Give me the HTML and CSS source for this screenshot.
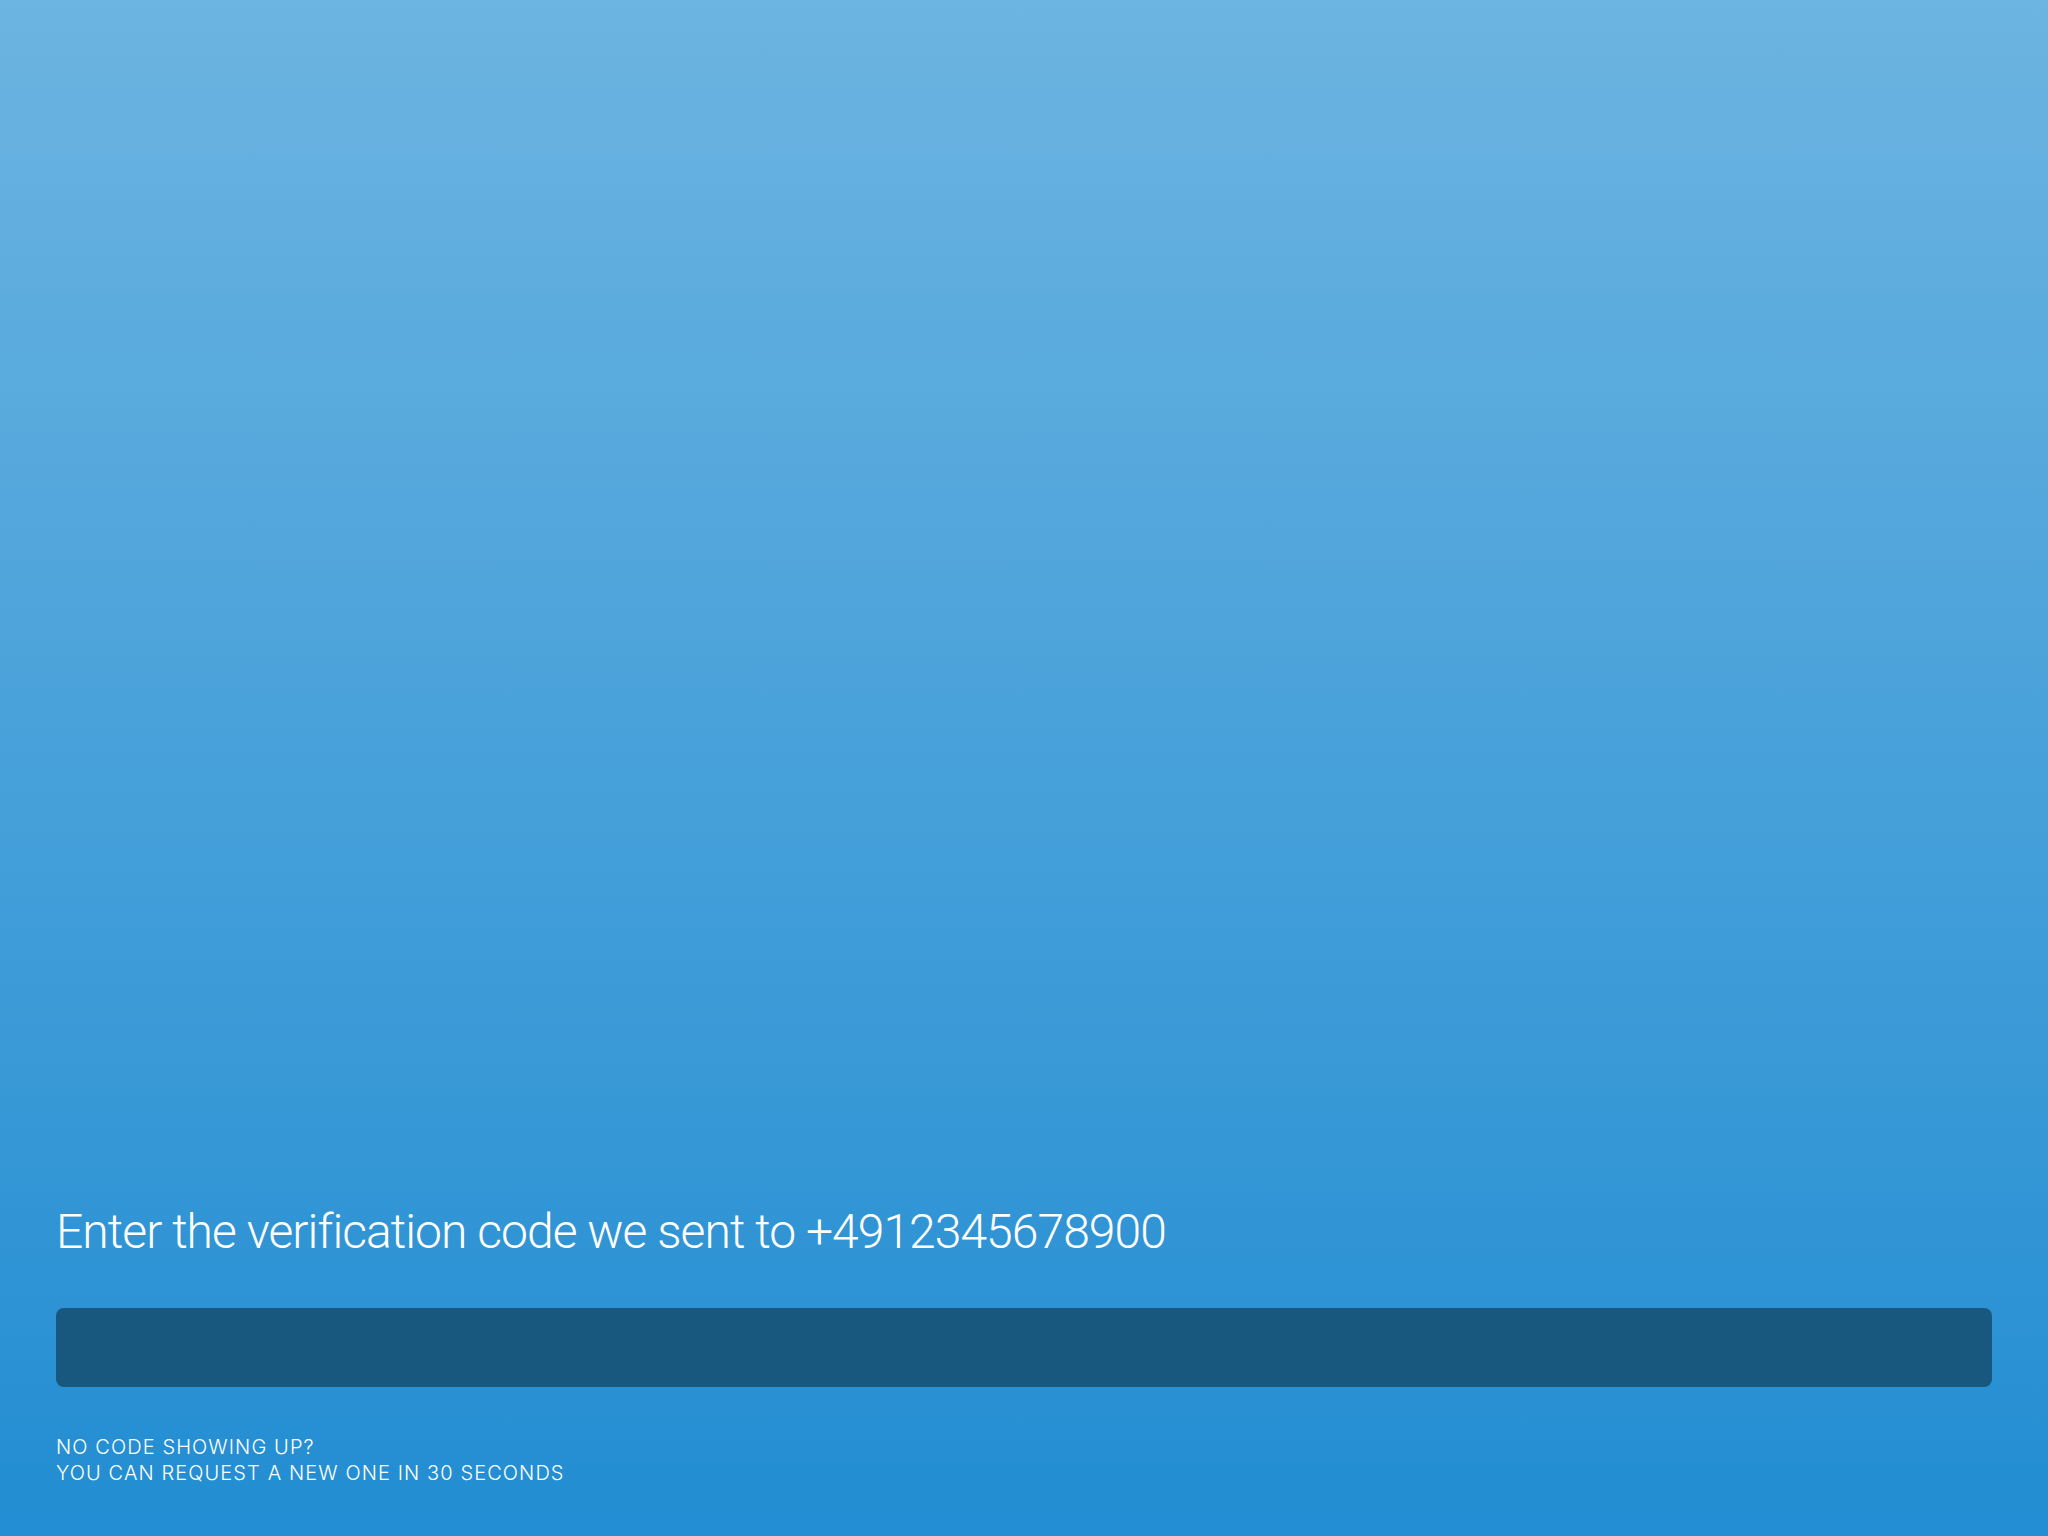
FILE: index.html
```html
<!DOCTYPE html>
<html>
<head>
<meta charset="utf-8">
<link rel="stylesheet" href="styles.css">
</head>
<body>
<main class="screen">
  <h1 class="title">Enter the verification code we sent to +4912345678900</h1>
  <div class="code-input"></div>
  <p class="hint">NO CODE SHOWING UP?<br>YOU CAN REQUEST A NEW ONE IN 30 SECONDS</p>
</main>
</body>
</html>
```
FILE: styles.css
```css
html, body {
  margin: 0;
  padding: 0;
}
body {
  width: 2048px;
  height: 1536px;
  background: linear-gradient(to bottom, #6cb4e1 0%, #228dd2 100%);
  font-family: Inter, "Noto Sans", sans-serif;
  color: #fff;
  overflow: hidden;
}
.screen {
  box-sizing: border-box;
  height: 1536px;
  display: flex;
  flex-direction: column;
  justify-content: flex-end;
  padding: 0 56px 50px 56px;
}
.title {
  margin: 0 0 46px 0;
  font-family: Roboto, Inter, sans-serif;
  font-weight: 300;
  font-size: 48px;
  line-height: 60px;
  letter-spacing: -0.95px;
}
.code-input {
  height: 79px;
  background: #18587e;
  border-radius: 8px;
  margin-bottom: 47px;
}
.hint {
  margin: 0;
  font-size: 20px;
  line-height: 26px;
  font-weight: 300;
  letter-spacing: 1.1px;
}
```
